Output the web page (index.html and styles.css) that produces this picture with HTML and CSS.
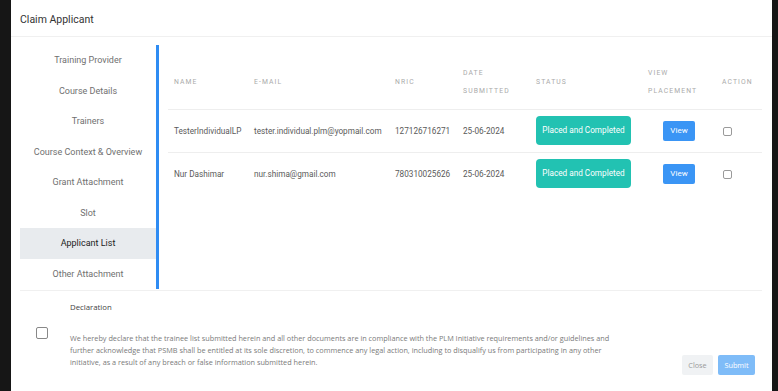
FILE: index.html
```html
<!DOCTYPE html>
<html lang="en">
<head>
    <meta charset="UTF-8">
    <meta name="viewport" content="width=device-width, initial-scale=1.0">
    <title>Claim Applicant</title>
    <link rel="stylesheet" href="styles.css">
</head>
<body>
    <div class="modal">
        <!-- Header -->
        <div class="modal-header">Claim Applicant</div>

        <!-- Body: side tabs + applicant table -->
        <div class="modal-body">
            <ul class="side-tabs">
                <li>Training Provider</li>
                <li>Course Details</li>
                <li>Trainers</li>
                <li>Course Context &amp; Overview</li>
                <li>Grant Attachment</li>
                <li>Slot</li>
                <li class="active">Applicant List</li>
                <li>Other Attachment</li>
            </ul>

            <table class="applicants">
                <thead>
                    <tr>
                        <th class="col-name">Name</th>
                        <th class="col-mail">E-mail</th>
                        <th class="col-nric">NRIC</th>
                        <th class="col-date">Date<br>Submitted</th>
                        <th class="col-status">Status</th>
                        <th class="col-view">View<br>Placement</th>
                        <th class="col-action">Action</th>
                    </tr>
                </thead>
                <tbody>
                    <tr>
                        <td>TesterIndividualLP</td>
                        <td>tester.individual.plm@yopmail.com</td>
                        <td>127126716271</td>
                        <td>25-06-2024</td>
                        <td><span class="badge">Placed and Completed</span></td>
                        <td class="center"><button class="view-btn">View</button></td>
                        <td><span class="check small"></span></td>
                    </tr>
                    <tr>
                        <td>Nur Dashimar</td>
                        <td>nur.shima@gmail.com</td>
                        <td>780310025626</td>
                        <td>25-06-2024</td>
                        <td><span class="badge">Placed and Completed</span></td>
                        <td class="center"><button class="view-btn">View</button></td>
                        <td><span class="check small"></span></td>
                    </tr>
                </tbody>
            </table>
        </div>

        <!-- Declaration footer -->
        <div class="modal-footer">
            <div class="decl-title">Declaration</div>
            <span class="check big"></span>
            <p class="decl-text">We hereby declare that the trainee list submitted herein and all other documents are in compliance with the PLM Initiative requirements and/or guidelines and further acknowledge that PSMB shall be entitled at its sole discretion, to commence any legal action, including to disqualify us from participating in any other initiative, as a result of any breach or false information submitted herein.</p>
            <div class="actions">
                <button class="btn-close">Close</button>
                <button class="btn-submit">Submit</button>
            </div>
        </div>
    </div>
</body>
</html>
```

FILE: styles.css
```css
/* Reset */
* {
    box-sizing: border-box;
    margin: 0;
    padding: 0;
}
body {
    font-family: Roboto, "Liberation Sans", sans-serif;
    background: #161616;
    height: 391px;
    overflow: hidden;
    display: flex;
}

/* Modal */
.modal {
    margin-left: 11px;
    width: 761px;
    height: 391px;
    background: #fff;
    color: #555;
}
.modal-header {
    height: 37px;
    padding: 13px 0 0 9px;
    font-size: 10.5px;
    color: #333;
    border-bottom: 1px solid #f0f0f0;
}
.modal-body {
    display: flex;
    align-items: flex-start;
    gap: 9px;
    padding: 8px 10px 0 9px;
}

/* Side tabs */
.side-tabs {
    list-style: none;
    width: 139px;
    border-right: 3px solid #2f8cf3;
    flex-shrink: 0;
}
.side-tabs li {
    height: 30.5px;
    line-height: 30.5px;
    text-align: center;
    font-size: 9px;
    color: #707070;
}
.side-tabs li.active {
    background: #e8ebee;
    color: #222;
}

/* Applicant table */
.applicants {
    width: 594px;
    margin-top: 10px;
    border-collapse: collapse;
    table-layout: fixed;
    font-size: 8.2px;
}
.applicants th {
    height: 54px;
    padding: 0 6px;
    text-align: left;
    font-weight: 400;
    font-size: 6.8px;
    letter-spacing: 1.1px;
    line-height: 18px;
    text-transform: uppercase;
    color: #aaa;
    border-bottom: 1px solid #eee;
}
.applicants td {
    height: 43px;
    padding: 0 6px;
    white-space: nowrap;
    color: #5a5a5a;
}
.applicants tbody tr:first-child td {
    border-bottom: 1px solid #eee;
}
.col-name { width: 80px; }
.col-mail { width: 141px; }
.col-nric { width: 68px; }
.col-date { width: 73px; }
.col-status { width: 112px; }
.col-view { width: 74px; }
.col-action { width: 46px; }
.applicants td.center {
    text-align: center;
}

.badge {
    display: inline-block;
    width: 95px;
    height: 29px;
    line-height: 29px;
    text-align: center;
    border-radius: 4px;
    background: #22c2b2;
    color: #fff;
}
.view-btn {
    width: 32px;
    height: 20px;
    border: none;
    border-radius: 2px;
    background: #3a95f5;
    color: #fff;
    font-family: inherit;
    font-size: 8px;
}

/* Checkboxes */
.check {
    display: inline-block;
    border: 1px solid #9a9a9a;
    border-radius: 2px;
    background: #fff;
}
.check.small {
    width: 9px;
    height: 9px;
    vertical-align: middle;
    margin-left: 1px;
}
.check.big {
    grid-column: 1;
    grid-row: 2;
    width: 12px;
    height: 12px;
    border-color: #888;
    margin-left: 16px;
}

/* Declaration footer */
.modal-footer {
    margin: 1px 10px 0 9px;
    border-top: 1px solid #f0f0f0;
    padding: 10px 7px 0 0;
    display: grid;
    grid-template-columns: 50px 1fr auto;
    grid-template-rows: 12px auto;
    row-gap: 14px;
    font-family: "Open Sans", sans-serif;
}
.decl-title {
    grid-column: 2;
    grid-row: 1;
    font-size: 7.8px;
    line-height: 12px;
    color: #444;
}
.decl-text {
    grid-column: 2;
    grid-row: 2;
    padding-top: 5px;
    width: 555px;
    font-size: 7.3px;
    line-height: 12px;
    color: #7a7a7a;
}
.actions {
    grid-column: 3;
    grid-row: 2;
    display: flex;
    gap: 5px;
    margin-top: 28px;
}
.actions button {
    height: 20px;
    border: none;
    border-radius: 2px;
    font-family: inherit;
    font-size: 7.3px;
}
.btn-close {
    width: 31px;
    background: #f0f2f4;
    color: #9a9a9a;
}
.btn-submit {
    width: 37px;
    background: #7fbcf8;
    color: #fff;
}
```
